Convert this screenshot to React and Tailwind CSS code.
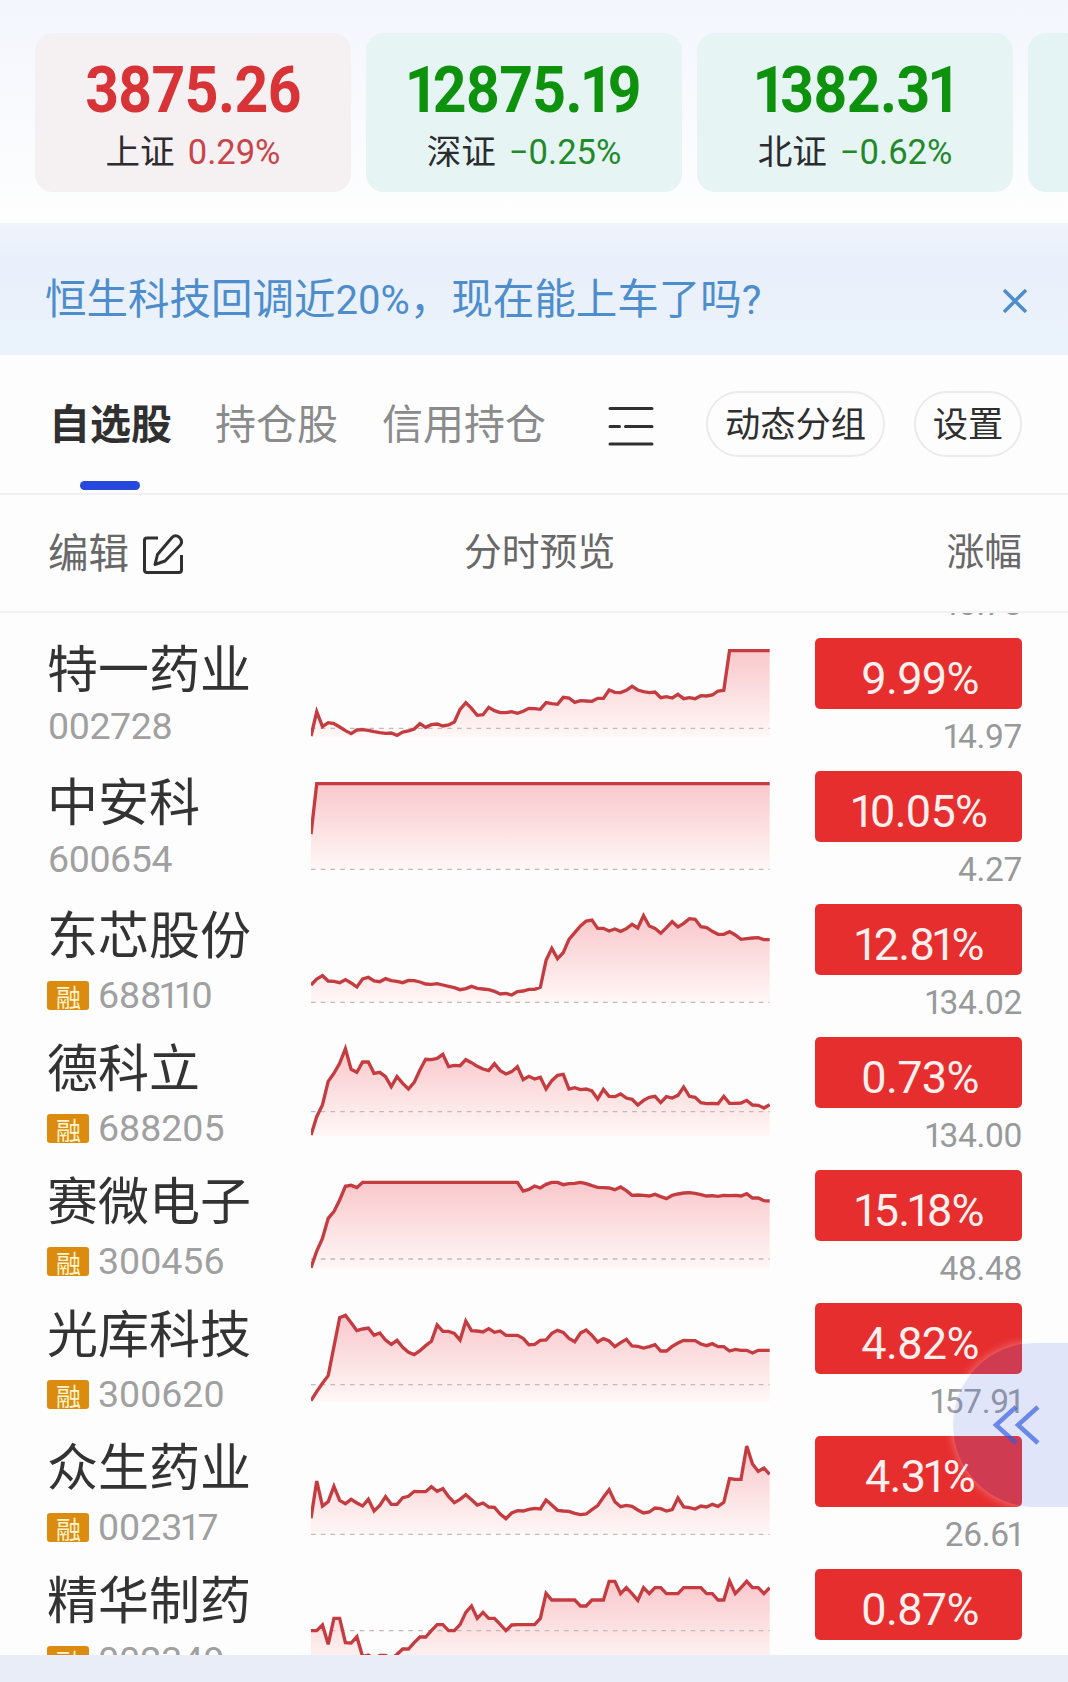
import React from "react";

const indexes = [
    { name: "上证", value: "3875.26", change: "0.29%", up: true },
    { name: "深证", value: "12875.19", change: "−0.25%", up: false },
    { name: "北证", value: "1382.31", change: "−0.62%", up: false },
];

// trend: 81 y values on a 1377 x 399 canvas, base: y of the previous close
const stocks = [
    { name: "", code: "", margin: false, percent: "", price: "10.78", base: 0, trend: [] },
    {
        name: "特一药业", code: "002728", margin: false, percent: "9.99%", price: "14.97", base: 310,
        trend: [
            333, 260, 305, 293, 296, 306, 317, 326, 315, 314, 316, 320, 323, 325, 324, 331, 321, 318, 312, 296,
            307, 299, 297, 303, 300, 291, 253, 233, 250, 271, 269, 247, 257, 263, 263, 260, 265, 259, 250, 251,
            253, 233, 236, 238, 217, 219, 232, 227, 228, 229, 220, 220, 195, 202, 203, 196, 184, 195, 200, 203,
            201, 218, 215, 219, 208, 221, 218, 221, 212, 213, 210, 198, 196, 77, 77, 77, 77, 77, 77, 77, 77,
        ],
    },
    {
        name: "中安科", code: "600654", margin: false, percent: "10.05%", price: "4.27", base: 334,
        trend: [228, ...Array(80).fill(77)],
    },
    {
        name: "东芯股份", code: "688110", margin: true, percent: "12.81%", price: "134.02", base: 334,
        trend: [
            282, 264, 254, 270, 271, 275, 266, 276, 288, 264, 259, 270, 272, 263, 269, 271, 275, 268, 269, 273,
            279, 280, 278, 282, 286, 290, 296, 293, 286, 292, 294, 296, 301, 309, 307, 312, 302, 300, 295, 295,
            289, 208, 172, 203, 185, 145, 125, 105, 90, 87, 112, 112, 120, 114, 121, 113, 100, 111, 74, 105,
            112, 127, 110, 92, 108, 97, 83, 85, 107, 110, 121, 130, 130, 122, 132, 145, 143, 141, 140, 146, 146,
        ],
    },
    {
        name: "德科立", code: "688205", margin: true, percent: "0.73%", price: "134.00", base: 263,
        trend: [
            333, 278, 243, 172, 148, 118, 74, 136, 145, 114, 114, 148, 145, 158, 188, 158, 178, 195, 175, 138,
            106, 107, 103, 91, 128, 124, 125, 107, 116, 127, 135, 140, 119, 140, 150, 143, 128, 167, 157, 165,
            160, 195, 170, 154, 151, 195, 191, 197, 195, 201, 225, 196, 217, 218, 210, 222, 226, 243, 229, 220,
            217, 236, 218, 222, 214, 189, 217, 220, 236, 239, 238, 239, 217, 238, 238, 237, 229, 243, 244, 252, 242,
        ],
    },
    {
        name: "赛微电子", code: "300456", margin: true, percent: "15.18%", price: "48.48", base: 306,
        trend: [
            332, 282, 244, 184, 164, 129, 88, 85, 92, ...Array(28).fill(76), 102, 97, 87,
            93, 82, 76, 76, 83, 80, 79, 76, 80, 86, 91, 92, 93, 98, 90, 101, 115, 114, 115, 117,
            112, 119, 125, 115, 111, 108, 107, 109, 113, 117, 116, 118, 115, 116, 115, 117, 110, 123, 123, 131, 132,
        ],
    },
    {
        name: "光库科技", code: "300620", margin: true, percent: "4.82%", price: "157.91", base: 284,
        trend: [
            332, 305, 280, 257, 170, 83, 76, 98, 122, 117, 114, 136, 129, 150, 163, 151, 172, 187, 194, 182,
            167, 154, 105, 124, 124, 130, 150, 93, 122, 123, 126, 116, 127, 123, 136, 136, 136, 145, 164, 163,
            151, 150, 130, 121, 127, 145, 155, 129, 120, 136, 156, 146, 153, 170, 158, 148, 168, 169, 174, 170,
            164, 183, 183, 169, 159, 151, 152, 152, 162, 167, 161, 170, 170, 183, 178, 181, 181, 189, 181, 181, 181,
        ],
    },
    {
        name: "众生药业", code: "002317", margin: true, percent: "4.31%", price: "26.61", base: 334,
        trend: [
            286, 174, 249, 236, 190, 232, 242, 229, 240, 249, 229, 264, 247, 221, 244, 244, 224, 220, 205, 206,
            206, 191, 205, 197, 221, 239, 229, 215, 230, 246, 240, 252, 253, 273, 287, 270, 263, 264, 259, 256,
            258, 231, 246, 262, 264, 265, 271, 275, 273, 260, 248, 223, 200, 236, 251, 247, 250, 261, 270, 267,
            255, 257, 264, 260, 225, 252, 254, 258, 249, 252, 244, 250, 238, 167, 169, 169, 69, 123, 145, 135, 154,
        ],
    },
    {
        name: "精华制药", code: "002349", margin: true, percent: "0.87%", price: "", base: 224,
        trend: [
            224, 224, 207, 265, 187, 187, 260, 261, 242, 302, 297, 309, 298, 298, 309, 295, 279, 279, 260, 243,
            243, 224, 206, 206, 224, 224, 206, 169, 150, 187, 169, 187, 187, 205, 224, 207, 206, 206, 206, 206,
            187, 112, 132, 132, 132, 132, 132, 150, 150, 132, 132, 132, 76, 76, 113, 95, 113, 133, 95, 113,
            95, 95, 113, 113, 113, 95, 95, 95, 95, 113, 113, 132, 132, 75, 113, 95, 76, 95, 95, 113, 95,
        ],
    },
];

// The digit 1 is set narrower than the others
const Num = ({ children, bold }) =>
    children.split("").map((char, index) =>
        char === "1" ? (
            <span key={index} className={bold ? "-ml-[0.04em] -mr-[0.09em]" : "-ml-[0.07em] -mr-[0.09em]"}>
                1
            </span>
        ) : (
            char
        ),
    );

const Sparkline = ({ trend, base }) => {
    const points = trend.map((y, index) => `${index * 17.2},${y}`).join(" ");

    return (
        <svg viewBox="0 0 1377 399" className="w-[459px] h-[133px] shrink-0">
            <defs>
                <linearGradient id="trend" gradientUnits="userSpaceOnUse" x1="0" y1="77" x2="0" y2="335">
                    <stop offset="0" stopColor="#f9c8cc" />
                    <stop offset="1" stopColor="#fff7f6" />
                </linearGradient>
            </defs>
            <polygon points={`0,335 ${points} 1376,335`} fill="url(#trend)" />
            <line x1="0" x2="1376" y1={base} y2={base} stroke="#c3b9ba" strokeWidth="4" strokeDasharray="14 15.2" />
            <polyline points={points} fill="none" stroke="#c43c40" strokeWidth="10" />
        </svg>
    );
};

const StockRow = ({ stock }) => (
    <div className="flex h-[133px] pl-[47px] pr-[46px]">
        <div className="w-[264px] shrink-0 pt-5 leading-none">
            <div className="text-[51px] text-[#333]">{stock.name}</div>
            {stock.margin ? (
                <div className="flex mt-[15px]">
                    <span className="w-[42px] h-[29px] mt-[4px] rounded-[3px] bg-[#db8c0f] text-[#fff4cf] text-[25px] pt-[5px] pl-[9px] overflow-hidden">
                        融
                    </span>
                    <span className="ml-[9px] text-[37.5px] text-[#a0a0a0]">
                        <Num>{stock.code}</Num>
                    </span>
                </div>
            ) : (
                <div className="mt-3 ml-px text-[37.5px] tracking-[-0.01em] text-[#a0a0a0]">
                    <Num>{stock.code}</Num>
                </div>
            )}
        </div>
        <Sparkline trend={stock.trend} base={stock.base} />
        <div className="ml-auto w-[207px] pt-[13px] leading-none">
            <div className="h-[71px] rounded-[5px] bg-[#e72e2f] text-[#fff0ee] text-[45px] tracking-[-0.015em] pt-[18px] pl-[3px] text-center">
                <Num>{stock.percent}</Num>
            </div>
            <div className="mt-[11px] text-right text-[33.5px] text-[#97999b] tracking-[-0.01em]">
                <Num>{stock.price}</Num>
            </div>
        </div>
    </div>
);

const App = () => {
    return (
        <div className="relative flex flex-col w-[1068px] h-[1682px] overflow-hidden bg-[#fdfdfe] font-['Roboto','Noto_Sans_CJK_SC',sans-serif]">
            <header className="flex gap-[15px] h-[223px] shrink-0 pt-[33px] pl-[35px] bg-linear-to-b from-[#f3f6fd] to-[#fefefe]">
                {indexes.map((item) => (
                    <div
                        key={item.name}
                        className={`w-[316px] h-[159px] shrink-0 rounded-[18px] pt-[26px] text-center leading-none ${item.up ? "bg-[#f5f0f1]" : "bg-[#e6f4f4]"}`}
                    >
                        <div
                            className={`text-[64px] font-bold tracking-[-0.01em] scale-x-[0.92] ${item.up ? "text-[#d83437]" : "text-[#0e920e]"}`}
                        >
                            <Num bold>{item.value}</Num>
                        </div>
                        <div className="flex justify-center gap-[13px] mt-[12px] text-[34.6px]">
                            <span className="text-[#2c2c30]">{item.name}</span>
                            <span className={item.up ? "text-[#c9444a]" : "text-[#22892a]"}>{item.change}</span>
                        </div>
                    </div>
                ))}
                <div className="w-[316px] h-[159px] shrink-0 rounded-[18px] bg-[#e4f3f3]" />
            </header>

            <div className="flex items-center justify-between h-[132px] shrink-0 pt-[22px] pl-[45px] pr-[41px] bg-linear-to-b from-[#f0f4fc] via-[#e9f0fb] via-30% to-[#eaf2fb] text-[#4d8dcc]">
                <p className="text-[41.5px] leading-none">
                    恒生科技回调近<span className="text-[40px]">20%</span>，现在能上车了吗?
                </p>
                <svg viewBox="0 0 24 24" className="w-6 h-6 mt-[2px]" fill="none" stroke="currentColor" strokeWidth="3.4">
                    <path d="M1 1L23 23M23 1L1 23" />
                </svg>
            </div>

            <nav className="flex h-[140px] shrink-0 pl-[49px] pr-[46px] border-b-2 border-[#f1f1f3] leading-none text-[41px] text-[#8b8b8b]">
                <div className="flex flex-col items-center pt-[50px]">
                    <span className="font-bold text-[#303030]">自选股</span>
                    <span className="w-[60px] h-[9px] mt-[35px] mr-px rounded-full bg-[#2748dc]" />
                </div>
                <span className="ml-[43px] pt-[50px]">持仓股</span>
                <span className="ml-[44px] pt-[50px]">信用持仓</span>
                <svg
                    viewBox="0 0 46 40"
                    className="w-[46px] h-[40px] mt-[51px] ml-[62px]"
                    fill="none"
                    stroke="#303030"
                    strokeWidth="3"
                    strokeLinecap="round"
                >
                    <path d="M2 2.500H44M2 20.500H11.500M17.500 20.500H44M2 38H44" />
                </svg>
                <button className="ml-auto mt-[36px] pt-[3px] w-[179px] h-[66px] rounded-full border-2 border-[#ebebec] text-[35.3px] text-[#2f2f2f] leading-none">
                    动态分组
                </button>
                <button className="ml-[29px] mt-[36px] pt-[3px] w-[108px] h-[66px] rounded-full border-2 border-[#ebebec] text-[35.3px] text-[#2f2f2f] leading-none">
                    设置
                </button>
            </nav>

            <div className="flex h-[118px] shrink-0 pt-[39px] pl-[48px] pr-[46px] border-b-2 border-[#f1f1f3] leading-none text-[37.8px] text-[#686868]">
                <span className="text-[40.5px]">编辑</span>
                <svg
                    viewBox="0 0 40 40"
                    className="w-10 h-10 ml-[14px]"
                    fill="none"
                    stroke="#303030"
                    strokeWidth="3"
                    strokeLinejoin="round"
                >
                    <path d="M15 4H4Q1.500 4 1.500 6.500V36Q1.500 38.500 4 38.500H36Q38.500 38.500 38.500 36V21" />
                    <path d="M12 30.500L14.500 20.500L29 3.500Q32.500 0 36.500 3.500Q40 7 37.500 11L22 27Z" />
                </svg>
                <span className="ml-[281px]">分时预览</span>
                <span className="ml-auto">涨幅</span>
            </div>

            <main className="h-[1042px] shrink-0 overflow-hidden">
                <div className="-mt-[121px]">
                    {stocks.map((stock, index) => (
                        <StockRow key={index} stock={stock} />
                    ))}
                </div>
            </main>

            <footer className="grow bg-[#e8edf7]" />

            <button className="absolute right-0 top-[1343px] w-[115px] h-[164px] rounded-l-full bg-[rgba(100,120,235,0.18)] shadow-[0_0_10px_rgba(255,255,255,0.4)]">
                <svg
                    viewBox="0 0 48 40"
                    className="w-12 h-10 ml-[39px]"
                    fill="none"
                    stroke="rgba(50,92,222,0.68)"
                    strokeWidth="4.5"
                >
                    <path d="M24 2L4 20L24 38M46 2L26 20L46 38" />
                </svg>
            </button>
        </div>
    );
};

export default App;
